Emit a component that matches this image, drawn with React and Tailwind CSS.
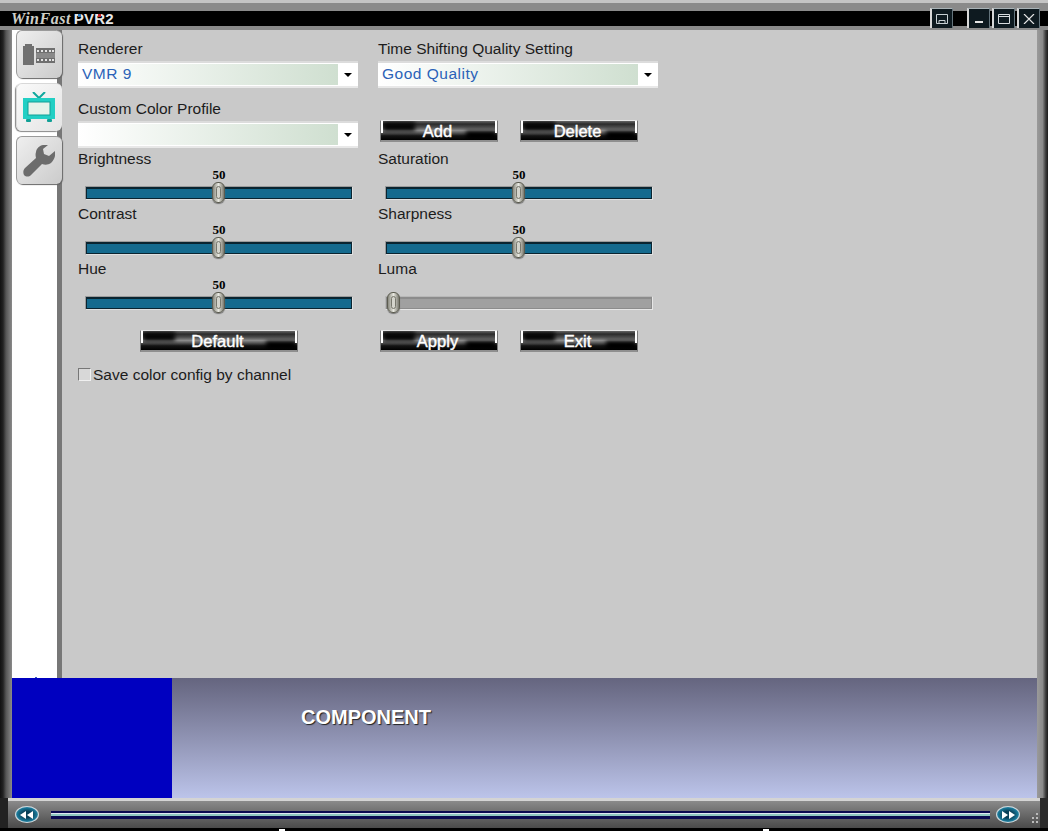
const sans = { fontFamily: '"Liberation Sans", Arial, sans-serif' };

function Label({ children, className = "" }) {
  return <div className={`h-[21px] leading-[19px] text-[15.5px] text-[#1c1c1c] ${className}`}>{children}</div>;
}

function Combo({ value }) {
  return (
    <div className="h-[27px] w-[280px] bg-white border-t-2 border-b-2 border-t-[#dcdcdc] border-b-[#e8e8e8] flex items-stretch py-[1px] pl-[1px]">
      <div className="w-[259px] bg-gradient-to-r from-white to-[#cfdfd0] pl-[3px] text-[15.5px] leading-[20px] text-[#2a62b8] tracking-[0.5px]">{value}</div>
      <div className="flex-1 flex items-center justify-center">
        <svg width="8" height="4" viewBox="0 0 8 4"><path d="M0 0h8L4 4z" fill="#000" /></svg>
      </div>
    </div>
  );
}

function Slider({ disabled, pos = 134 }) {
  return (
    <div className="relative h-[34px] w-[280px]">
      {!disabled && (
        <div className="absolute left-0 w-[282px] top-[-2px] text-center text-[13px] leading-[14px] font-bold text-black" style={{ fontFamily: '"Liberation Serif", serif' }}>50</div>
      )}
      <div className={`absolute left-[7px] top-[16px] h-[14px] w-[268px] border ${disabled ? "border-[#b8b8b8] border-b-[#e6e6e6] border-r-[#e6e6e6]" : "border-[#9a9a9a] border-b-[#e0e0e0] border-r-[#e0e0e0]"}`}>
        <div className={`h-full w-full border-t-2 border-b border-l border-r ${disabled ? "bg-[#a0a0a0] border-[#8c8c8c]" : "bg-[#146a8e] border-[#0a2430]"}`} />
      </div>
      <div className="absolute top-[12px] h-[21px] w-[13px] rounded-[6px] border border-[#5c5c50] bg-gradient-to-r from-[#8a8a80] via-[#e8e8e0] to-[#77776d] flex justify-center shadow-[0_1px_1px_#777]" style={{ left: pos }}>
        <div className="mt-[3px] h-[13px] w-[5px] rounded-[3px] border border-[#77776d] bg-[#d4d4cc]" />
      </div>
    </div>
  );
}

function Btn({ children, w = 118 }) {
  return (
    <div className="relative h-[22px] overflow-hidden border-t border-t-[#e4e4e4] border-b-2 border-b-[#8f8f8f] border-l border-l-[#777] border-r border-r-[#777] bg-[linear-gradient(180deg,#666_0%,#2a2a2a_16%,#4a4a4a_32%,#8a8a8a_50%,#5a5a5a_62%,#141414_78%,#000_100%)] flex items-center justify-center text-[16.5px] leading-none text-white" style={{ width: w }}>
      <div className="absolute left-[2px] top-[1px] w-[32px] h-[9px] bg-[#050505] blur-[2px]" />
      <div className="absolute right-[1px] bottom-0 w-[30px] h-[9px] bg-black blur-[2px]" />
      <div className="absolute left-0 top-0 w-[2px] h-[12px] bg-white" />
      <div className="absolute right-0 top-0 w-[2px] h-[12px] bg-white" />
      <span className="relative top-[1px] right-[1.5px] [-webkit-text-stroke:0.4px_white]">{children}</span>
    </div>
  );
}

function Tab({ active, children }) {
  return (
    <div className={`h-[48px] w-[46px] shrink-0 rounded-[6px] border-l border-t flex items-center justify-center pr-[1px] ${active ? "bg-gradient-to-br from-[#fafafa] to-[#e4e4e4] border-[#d8d8d8] shadow-[-1px_1px_1px_#888]" : "bg-gradient-to-br from-[#efefef] to-[#cbcbcb] border-[#9a9a9a] shadow-[1px_1px_1px_#666]"}`}>
      {children}
    </div>
  );
}

function FilmIcon() {
  return (
    <svg width="32" height="21" viewBox="0 0 32 21">
      <path d="M0 2h2V0h7v2h2v19H0z" fill="#707070" />
      <rect x="13" y="4" width="19" height="15" fill="#6f6f6f" />
      <g fill="#e4e4e4">
        {[14, 18, 22, 26, 29].map((x) => <rect key={x} x={x} y="6" width="2" height="2" />)}
        {[14, 18, 22, 26, 29].map((x) => <rect key={x} x={x} y="15" width="2" height="2" />)}
      </g>
      <rect x="13" y="9" width="19" height="5" fill="#8a8a8a" />
    </svg>
  );
}

function TvIcon() {
  return (
    <svg width="32" height="31" viewBox="0 0 32 31">
      <path d="M10 0l6 6 6-6" fill="none" stroke="#11a89e" strokeWidth="2" />
      <rect x="0" y="6" width="32" height="21" fill="#22cfc4" />
      <rect x="5" y="10" width="22" height="13" fill="#e6f3ea" stroke="#11a096" />
      <rect x="3" y="27" width="5" height="3" rx="1" fill="#11a096" />
      <rect x="24" y="27" width="5" height="3" rx="1" fill="#11a096" />
    </svg>
  );
}

function WrenchIcon() {
  return (
    <svg width="32" height="32" viewBox="0 0 32 32">
      <path d="M32 6l-6 5-5-2-1-5 5-4c-5-1-11 1-12 7-1 3 0 5 0 6L2 23c-2 2-2 5-1 7 2 2 5 2 7 0l11-11c3 1 6 1 9-1 3-3 5-7 4-12z" fill="#6c6c6c" />
    </svg>
  );
}

function SkinBtn({ children, mr = 0 }) {
  return (
    <div className="h-[20px] w-[23px] border-l-2 border-l-[#d8d8d8] border-t border-t-[#aab4b8] border-r border-r-[#64747c] bg-[#0e1a20] flex items-center justify-center" style={{ marginRight: mr }}>
      {children}
    </div>
  );
}

function SeekBtn({ dir }) {
  return (
    <div className="h-[17px] w-[24px] rounded-[50%] bg-[radial-gradient(ellipse_at_center,#0a4058_30%,#1a7a9a_65%,#dfeaee_85%)] border border-[#cfd8dc] flex items-center justify-center">
      <svg width="14" height="8" viewBox="0 0 14 8">
        <path d={dir === "l" ? "M6 0v8L0 4zM13 0v8L7 4z" : "M1 0v8l6-4zM8 0v8l6-4z"} fill="#fff" />
      </svg>
    </div>
  );
}

export default function App() {
  return (
    <div className="w-[1048px] h-[831px] overflow-hidden flex flex-col bg-[#555]" style={sans}>
      {/* Title bar */}
      <div className="relative h-[30px] shrink-0 border-t-[3px] border-t-[#c4c4c4] bg-[#8a8a8a]">
        <div className="h-[8px]" />
        <div className="h-[15px] bg-black flex items-center pl-[11px]">
          <span className="text-[16px] font-bold italic tracking-[0.5px] text-[#cfcfc8] leading-none" style={{ fontFamily: '"Liberation Serif", serif' }}>WinFast</span>
          <span className="relative ml-[3px] text-[15px] font-bold tracking-[0.2px] text-[#e8e8e8] leading-none whitespace-pre">
            PVR2
            <span className="absolute left-[4px] top-[3px] w-[3px] h-[3px] bg-[#2a7ac0]" />
            <span className="absolute left-[24px] top-[3px] w-[3px] h-[3px] bg-[#c02028]" />
          </span>
        </div>
        <div className="absolute right-[8px] top-[5px] flex items-center">
          <SkinBtn mr={14}>
            <svg width="12" height="10" viewBox="0 0 12 10" fill="none" stroke="#c8d0d4"><path d="M.5.5h11v9H.5z" /><path d="M3 6.5h6v3H3z" /></svg>
          </SkinBtn>
          <SkinBtn mr={2}>
            <svg width="10" height="10" viewBox="0 0 10 10"><rect x="1" y="7" width="8" height="2" fill="#e4e4e4" /></svg>
          </SkinBtn>
          <SkinBtn mr={2}>
            <svg width="12" height="10" viewBox="0 0 12 10" fill="none" stroke="#d8dcdf"><path d="M.5.5h11v9H.5z" /><path d="M.5 2.5h11" /></svg>
          </SkinBtn>
          <SkinBtn>
            <svg width="12" height="10" viewBox="0 0 12 10" stroke="#e4e4e4" strokeWidth="1.2"><path d="M1 0l10 10M11 0L1 10" /></svg>
          </SkinBtn>
        </div>
      </div>

      {/* Middle */}
      <div className="flex-1 flex min-h-0">
        <div className="w-[12px] shrink-0 bg-[linear-gradient(90deg,#111_0%,#222_25%,#555_50%,#8a8a8a_100%)]" />
        <div className="flex-1 flex flex-col min-w-0">
          <div className="flex-1 flex min-h-0">
            {/* Sidebar */}
            <div className="w-[50px] shrink-0 bg-white relative flex flex-col gap-[5px] pl-[4px] border-r-[5px] border-r-[#777]">
              <Tab><FilmIcon /></Tab>
              <Tab active><TvIcon /></Tab>
              <Tab><WrenchIcon /></Tab>
              <div className="absolute left-[23px] bottom-0 w-[2px] h-[1px] bg-[#3a5ac0]" />
            </div>
            {/* Content */}
            <div className="flex-1 bg-[#c9c9c9] pl-[16px] pt-[10px]">
              <div className="flex gap-[20px]">
                <div className="w-[280px]">
                  <Label className="-translate-y-[1px]">Renderer</Label>
                  <Combo value="VMR 9" />
                  <Label className="mt-[12px] -translate-y-[1px]">Custom Color Profile</Label>
                  <Combo value="" />
                  <Label className="mt-[1px]">Brightness</Label>
                  <Slider />
                  <Label>Contrast</Label>
                  <Slider />
                  <Label>Hue</Label>
                  <Slider />
                  <div className="mt-[16px] pl-[62px]"><Btn w={158}>Default</Btn></div>
                </div>
                <div className="w-[280px]">
                  <Label className="-translate-y-[1px]">Time Shifting Quality Setting</Label>
                  <Combo value="Good Quality" />
                  <div className="mt-[32px] h-[22px] pl-[2px] flex gap-[22px]">
                    <Btn>Add</Btn>
                    <Btn>Delete</Btn>
                  </div>
                  <div className="h-[7px]" />
                  <Label>Saturation</Label>
                  <Slider />
                  <Label>Sharpness</Label>
                  <Slider />
                  <Label>Luma</Label>
                  <Slider disabled pos={9} />
                  <div className="mt-[16px] pl-[2px] flex gap-[22px]">
                    <Btn>Apply</Btn>
                    <Btn>Exit</Btn>
                  </div>
                </div>
              </div>
              <div className="mt-[16px] flex items-center h-[13px] text-[15.5px] leading-[13px] text-[#1c1c1c]">
                <div className="w-[13px] h-[13px] bg-[#d8d8d8] border border-t-[#777] border-l-[#777] border-r-[#f0f0f0] border-b-[#f0f0f0] mr-[2px]" />
                Save color config by channel
              </div>
            </div>
          </div>
          {/* Bottom panel */}
          <div className="h-[120px] shrink-0 flex">
            <div className="w-[160px] bg-[#0000c0]" />
            <div className="flex-1 bg-gradient-to-b from-[#65657f] to-[#bcc4ea] pl-[129px] pt-[27px] text-[20px] leading-[24px] font-bold text-white [text-shadow:1px_1px_1px_#222]">COMPONENT</div>
          </div>
        </div>
        <div className="w-[11px] shrink-0 bg-[linear-gradient(90deg,#9a9a9a_0%,#8a8a8a_50%,#3a3a3a_80%,#1c1c1c_100%)]" />
      </div>

      {/* Status bar */}
      <div className="relative h-[33px] shrink-0 bg-black">
        <div className="h-[30px] flex border-l-[8px] border-l-[#222] border-r-[8px] border-r-[#2a2a2a]">
          <div className="flex-1 border-t-[3px] border-t-[#d4d4d4] bg-gradient-to-b from-[#8a8a8a] to-[#4a4a4a] flex items-center pl-[7px] pr-[20px] gap-[12px]">
            <SeekBtn dir="l" />
            <div className="flex-1 h-[8px] bg-[#0a0a50] flex flex-col justify-center">
              <div className="h-[1px] bg-[#dfe8f0]" />
              <div className="h-[2px] bg-[#8fc8c0]" />
            </div>
            <div className="-ml-[6px]"><SeekBtn dir="r" /></div>
          </div>
        </div>
        <div className="absolute right-[10px] top-[15px] grid grid-cols-2 gap-[2px]">
          <span className="w-[2px] h-[2px]" />
          <span className="w-[2px] h-[2px] bg-[#bbb]" />
          <span className="w-[2px] h-[2px] bg-[#bbb]" />
          <span className="w-[2px] h-[2px] bg-[#bbb]" />
          <span className="w-[2px] h-[2px] bg-[#bbb]" />
          <span className="w-[2px] h-[2px] bg-[#bbb]" />
        </div>
        <div className="absolute left-[279px] bottom-0 w-[6px] h-[2px] bg-white" />
        <div className="absolute left-[763px] bottom-0 w-[6px] h-[2px] bg-white" />
      </div>
    </div>
  );
}
